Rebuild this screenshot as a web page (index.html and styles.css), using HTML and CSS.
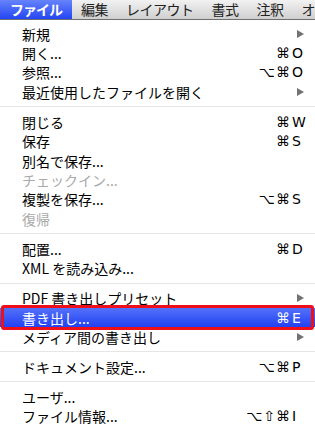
FILE: index.html
```html
<!DOCTYPE html>
<html lang="ja">
<head>
    <meta charset="UTF-8">
    <meta name="viewport" content="width=device-width, initial-scale=1.0">
    <title>ファイル メニュー</title>
    <link rel="stylesheet" href="styles.css">
</head>
<body>

    <!-- Menu Bar -->
    <div class="menubar">
        <span class="menubar-item active">ファイル</span>
        <span class="menubar-item">編集</span>
        <span class="menubar-item">レイアウト</span>
        <span class="menubar-item">書式</span>
        <span class="menubar-item">注釈</span>
        <span class="menubar-item">オブジェクト</span>
    </div>

    <!-- File Menu -->
    <ul class="menu">
        <li class="menu-item"><span class="label">新規</span><span class="arrow"></span></li>
        <li class="menu-item"><span class="label">開く...</span><span class="keys"><span class="mods">⌘</span><span class="key">O</span></span></li>
        <li class="menu-item"><span class="label">参照...</span><span class="keys"><span class="mods">⌥⌘</span><span class="key">O</span></span></li>
        <li class="menu-item"><span class="label">最近使用したファイルを開く</span><span class="arrow"></span></li>
        <li class="separator"></li>
        <li class="menu-item"><span class="label">閉じる</span><span class="keys"><span class="mods">⌘</span><span class="key">W</span></span></li>
        <li class="menu-item"><span class="label">保存</span><span class="keys"><span class="mods">⌘</span><span class="key">S</span></span></li>
        <li class="menu-item"><span class="label">別名で保存...</span></li>
        <li class="menu-item disabled"><span class="label">チェックイン...</span></li>
        <li class="menu-item"><span class="label">複製を保存...</span><span class="keys"><span class="mods">⌥⌘</span><span class="key">S</span></span></li>
        <li class="menu-item disabled"><span class="label">復帰</span></li>
        <li class="separator"></li>
        <li class="menu-item"><span class="label">配置...</span><span class="keys"><span class="mods">⌘</span><span class="key">D</span></span></li>
        <li class="menu-item"><span class="label">XML を読み込み...</span></li>
        <li class="separator"></li>
        <li class="menu-item"><span class="label">PDF 書き出しプリセット</span><span class="arrow"></span></li>
        <li class="menu-item selected"><span class="label">書き出し...</span><span class="keys"><span class="mods">⌘</span><span class="key">E</span></span></li>
        <li class="menu-item"><span class="label">メディア間の書き出し</span><span class="arrow"></span></li>
        <li class="separator"></li>
        <li class="menu-item"><span class="label">ドキュメント設定...</span><span class="keys"><span class="mods">⌥⌘</span><span class="key">P</span></span></li>
        <li class="separator"></li>
        <li class="menu-item"><span class="label">ユーザ...</span></li>
        <li class="menu-item"><span class="label">ファイル情報...</span><span class="keys"><span class="mods">⌥⇧⌘</span><span class="key">I</span></span></li>
    </ul>

</body>
</html>
```

FILE: styles.css
```css
/* Global Styles */
body {
    margin: 0;
    width: 315px;
    height: 431px;
    overflow: hidden;
    background: #ffffff;
    font-family: "Noto Sans CJK JP", "Noto Sans", sans-serif;
    font-size: 14px;
    color: #000;
}

/* Menu Bar */
.menubar {
    height: 19px;
    display: flex;
    white-space: nowrap;
    overflow: hidden;
    background: linear-gradient(#f2f2f2, #cfcfcf);
    border-bottom: 1px solid #6f6f6f;
}

.menubar-item {
    flex-shrink: 0;
    padding: 0 9px;
    line-height: 19px;
    letter-spacing: -0.5px;
    color: #222;
}

.menubar-item.active {
    padding: 0 10px 0 10px;
    color: #fff;
    font-weight: bold;
    letter-spacing: -1px;
    background: linear-gradient(#6683fb, #2446f4);
}

/* Menu */
.menu {
    list-style: none;
    margin: 0;
    padding: 4px 0 0;
}

.menu-item {
    position: relative;
    height: 19.4px;
    display: flex;
    align-items: center;
    padding: 0 10px 0 22px;
}

.menu-item .label {
    flex: 1;
    line-height: 1;
    white-space: nowrap;
}

.menu-item.disabled {
    color: #a9a9a9;
}

.menu-item.selected {
    color: #fff;
    background: linear-gradient(#5472fa, #2241f2);
}

/* red annotation box over the selected row */
.menu-item.selected::after {
    content: "";
    position: absolute;
    left: 1px;
    right: 1px;
    top: -3px;
    bottom: -3px;
    border: 3px solid #ee0f1b;
    border-radius: 3px;
}

/* Shortcuts */
.keys {
    display: flex;
    font-family: "DejaVu Sans", sans-serif;
    font-size: 14px;
}

.mods {
    text-align: right;
    letter-spacing: 1px;
}

.key {
    width: 13px;
    padding-left: 1px;
}

/* Submenu arrow */
.arrow {
    width: 0;
    height: 0;
    margin-right: 1px;
    border-left: 7px solid #727272;
    border-top: 4px solid transparent;
    border-bottom: 4px solid transparent;
}

.separator {
    height: 10.6px;
    display: flex;
    align-items: center;
}

.separator::before {
    content: "";
    flex: 1;
    height: 1px;
    background: #e6e6e6;
}
```
